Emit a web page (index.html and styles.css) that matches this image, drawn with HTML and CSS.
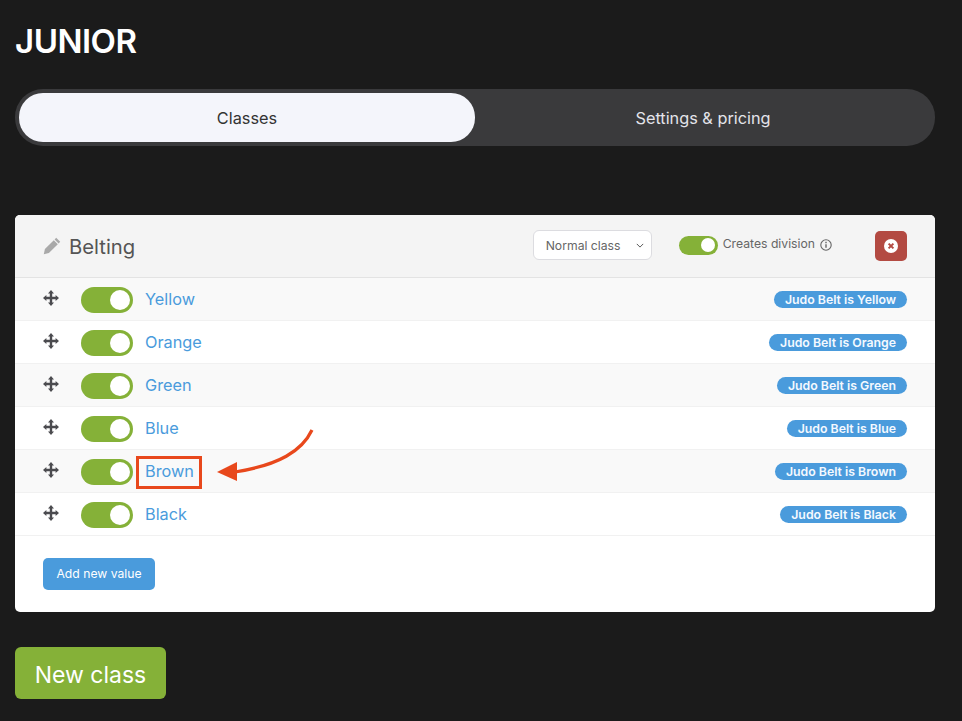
FILE: index.html
```html
<!DOCTYPE html>
<html lang="en">
<head>
    <meta charset="UTF-8">
    <title>Junior</title>
    <link rel="stylesheet" href="styles.css">
</head>
<body>
    <h1 class="page-title">JUNIOR</h1>
    <div class="tabs">
        <div class="tab tab-active">Classes</div>
        <div class="tab">Settings &amp; pricing</div>
    </div>
    <div class="card">
        <div class="card-header">
            <svg class="pencil" viewBox="0 0 18 18" width="18" height="18"><path d="M13.2.8 17.2 4.8 15.6 6.4 11.6 2.4zM10.8 3.2l4 4-8.9 8.9L.8 17.2l1.1-5.1z" fill="#a9a9a9"/></svg>
            <span class="card-title">Belting</span>
            <div class="select">Normal class
                <svg class="chevron" viewBox="0 0 10 6" width="8" height="5"><path d="M1 1l4 4 4-4" fill="none" stroke="#555" stroke-width="1.2"/></svg>
            </div>
            <span class="toggle toggle-small"><span class="knob"></span></span>
            <span class="division">Creates division</span>
            <svg class="info" viewBox="0 0 12 12" width="12" height="12"><circle cx="6" cy="6" r="5.2" fill="none" stroke="#666" stroke-width="1.1"/><path d="M6 5.2v3.6M6 2.8v1.4" stroke="#666" stroke-width="1.4"/></svg>
            <button class="delete-btn">
                <svg viewBox="0 0 14 14" width="14" height="14"><circle cx="7" cy="7" r="7" fill="#fff"/><path d="M4.6 4.6l4.8 4.8M9.4 4.6l-4.8 4.8" stroke="#b34a42" stroke-width="2"/></svg>
            </button>
        </div>
        <div class="row">
            <svg class="move" viewBox="0 0 16 16" width="16" height="16"><use href="#move-icon"/></svg>
            <span class="toggle"><span class="knob"></span></span>
            <a class="value">Yellow</a>
            <span class="badge">Judo Belt is Yellow</span>
        </div>
        <div class="row">
            <svg class="move" viewBox="0 0 16 16" width="16" height="16"><use href="#move-icon"/></svg>
            <span class="toggle"><span class="knob"></span></span>
            <a class="value">Orange</a>
            <span class="badge">Judo Belt is Orange</span>
        </div>
        <div class="row">
            <svg class="move" viewBox="0 0 16 16" width="16" height="16"><use href="#move-icon"/></svg>
            <span class="toggle"><span class="knob"></span></span>
            <a class="value">Green</a>
            <span class="badge">Judo Belt is Green</span>
        </div>
        <div class="row">
            <svg class="move" viewBox="0 0 16 16" width="16" height="16"><use href="#move-icon"/></svg>
            <span class="toggle"><span class="knob"></span></span>
            <a class="value">Blue</a>
            <span class="badge">Judo Belt is Blue</span>
        </div>
        <div class="row">
            <svg class="move" viewBox="0 0 16 16" width="16" height="16"><use href="#move-icon"/></svg>
            <span class="toggle"><span class="knob"></span></span>
            <a class="value">Brown</a>
            <span class="badge">Judo Belt is Brown</span>
            <span class="highlight"></span>
            <svg class="arrow" viewBox="0 0 100 60" width="100" height="60">
                <path d="M95 1C85 22 62 36 18 43" fill="none" stroke="#e8481c" stroke-width="3.2"/>
                <path d="M0 43 20 33 20 52z" fill="#e8481c"/>
            </svg>
        </div>
        <div class="row">
            <svg class="move" viewBox="0 0 16 16" width="16" height="16"><use href="#move-icon"/></svg>
            <span class="toggle"><span class="knob"></span></span>
            <a class="value">Black</a>
            <span class="badge">Judo Belt is Black</span>
        </div>
        <div class="card-footer">
            <button class="add-btn">Add new value</button>
        </div>
    </div>
    <button class="new-btn">New class</button>

    <svg class="defs" width="0" height="0">
        <symbol id="move-icon" viewBox="0 0 16 16">
            <path d="M8 0 11 3.4H9.2V6.8H12.6V5L16 8l-3.4 3V9.2H9.2v3.4H11L8 16l-3-3.4H6.8V9.2H3.4V11L0 8l3.4-3v1.8H6.8V3.4H5z" fill="#4b4b4f"/>
        </symbol>
    </svg>
</body>
</html>
```

FILE: styles.css
```css
body {
    margin: 0;
    padding: 0 27px 0 15px;
    background: #1b1b1b;
    font-family: 'Inter', sans-serif;
    color: #fff;
    height: 721px;
    overflow: hidden;
}
.page-title {
    margin: 0;
    padding-top: 21px;
    font-size: 33px;
    line-height: 40px;
    font-weight: 600;
    letter-spacing: -0.5px;
}
.tabs {
    display: flex;
    margin-top: 28px;
    padding: 4px;
    height: 49px;
    background: #3a3a3c;
    border-radius: 28px;
}
.tab {
    flex: 1;
    display: flex;
    align-items: center;
    justify-content: center;
    font-size: 16.3px;
    color: #e4e4ea;
    border-radius: 24px;
}
.tab-active {
    background: #f4f5fb;
    color: #333;
}
.card {
    margin-top: 69px;
    background: #fff;
    border-radius: 5px;
    height: 397px;
}
.card-header {
    display: flex;
    align-items: center;
    height: 62px;
    padding: 0 28px;
    background: #f4f4f4;
    border-bottom: 1px solid #e3e3e3;
    border-radius: 5px 5px 0 0;
}
.pencil {
    margin-right: 8px;
}
.card-title {
    font-size: 20.3px;
    color: #555;
    margin: 0 auto 0 0;
}
.select {
    display: flex;
    align-items: center;
    justify-content: space-between;
    box-sizing: border-box;
    width: 119px;
    height: 30px;
    padding: 0 7px 0 12px;
    background: #fff;
    border: 1.5px solid #dcdce0;
    border-radius: 6px;
    font-size: 12.2px;
    color: #666;
    margin: 0 27px 2px 0;
}
.toggle {
    display: flex;
    align-items: center;
    justify-content: flex-end;
    box-sizing: border-box;
    width: 52px;
    height: 26px;
    margin-top: 2px;
    padding-right: 3px;
    background: #85b138;
    border-radius: 13px;
    flex-shrink: 0;
}
.knob {
    width: 20px;
    height: 20px;
    background: #fff;
    border-radius: 50%;
}
.toggle-small {
    width: 39px;
    height: 19px;
    margin: 0 5px 2px 0;
    padding-right: 3px;
}
.toggle-small .knob {
    width: 14px;
    height: 14px;
}
.division {
    font-size: 12.2px;
    color: #666;
    margin: -6px 5px 0 0;
}
.info {
    margin-top: -2px;
}
.delete-btn {
    display: flex;
    align-items: center;
    justify-content: center;
    width: 32px;
    height: 30px;
    margin-left: 43px;
    padding: 0;
    border: none;
    background: #b34a42;
    border-radius: 5px;
}
.row {
    position: relative;
    display: flex;
    align-items: center;
    box-sizing: border-box;
    height: 43px;
    padding: 0 28px;
    border-bottom: 1px solid #f1f1f1;
}
.row:nth-child(even) {
    background: #f9f9f9;
}
.move {
    margin-top: -2px;
    margin-right: 22px;
}
.value {
    margin-left: 12px;
    font-size: 16.3px;
    color: #4a9bdc;
}
.badge {
    margin-left: auto;
    padding: 0 11px;
    height: 17px;
    line-height: 17px;
    background: #4a9bdc;
    border-radius: 9px;
    font-size: 12.3px;
    font-weight: 600;
    color: #f4f9ff;
}
.highlight {
    position: absolute;
    left: 121px;
    top: 6px;
    width: 60px;
    height: 27px;
    border: 3px solid #e8481c;
}
.arrow {
    position: absolute;
    left: 202px;
    top: -21px;
}
.card-footer {
    padding: 22px 28px;
}
.add-btn {
    display: block;
    width: 112px;
    height: 32px;
    padding: 0 0 1px;
    background: #4a9bdc;
    border: none;
    border-radius: 5px;
    font-family: inherit;
    font-size: 12.2px;
    color: #fff;
}
.new-btn {
    display: block;
    width: 151px;
    height: 52px;
    margin-top: 35px;
    padding: 3px 0 0;
    background: #85b138;
    border: none;
    border-radius: 6px;
    font-family: inherit;
    font-size: 23px;
    color: #fff;
}
.defs {
    position: absolute;
}
```
